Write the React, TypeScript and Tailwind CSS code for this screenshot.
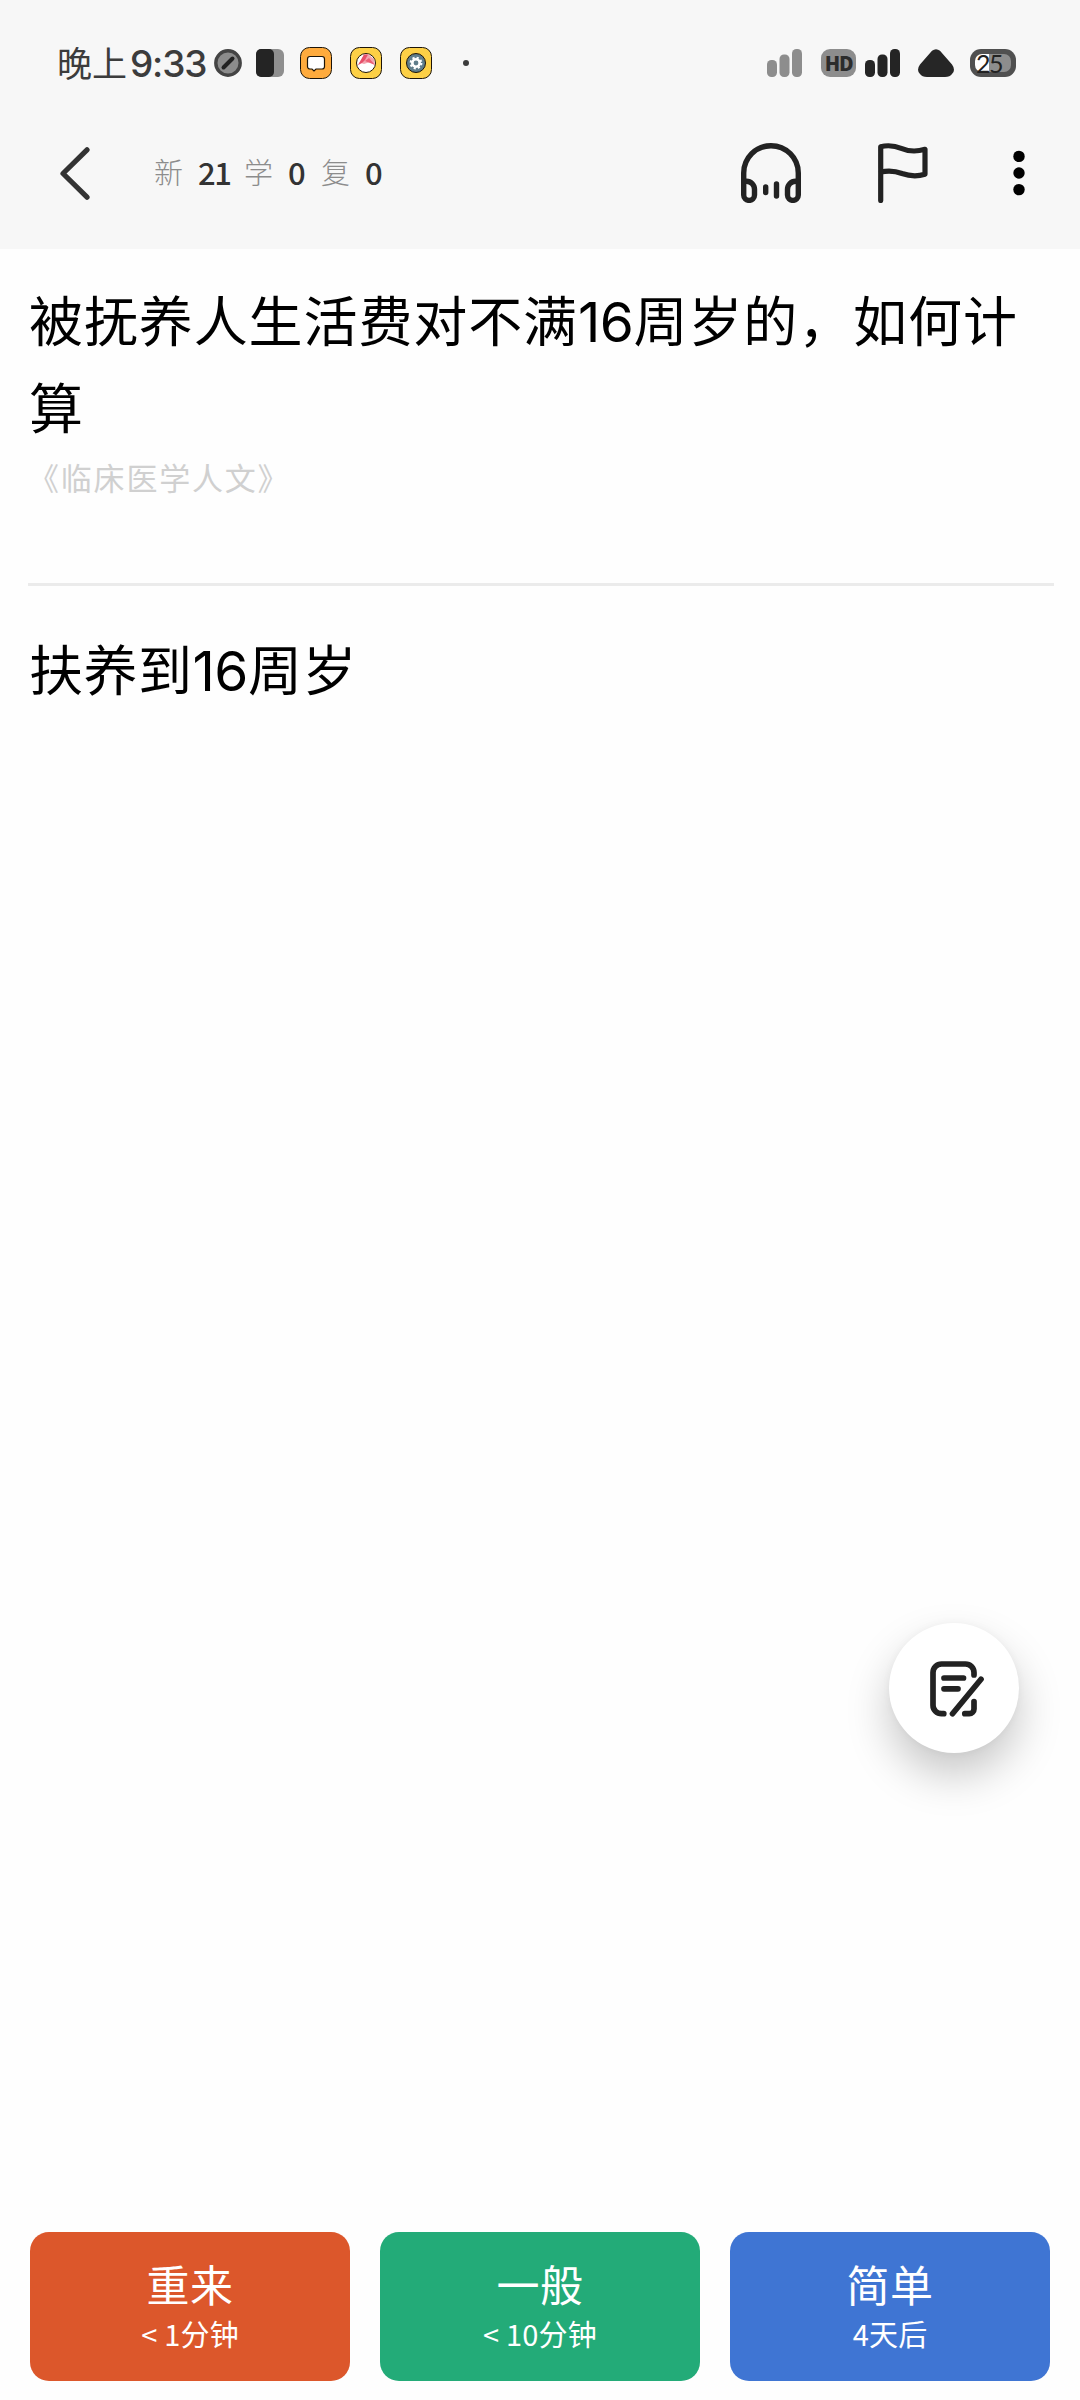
import type { ReactNode } from "react";

interface AnswerButtonProps {
  label: string;
  interval: ReactNode;
  className: string;
}

const counts = [
  { label: "新", value: 21, width: "w-[46px]" },
  { label: "学", value: 0, width: "w-[33px]" },
  { label: "复", value: 0, width: "w-[33px]" },
];

function Num({ children }: { children: ReactNode }) {
  return <span className="font-[Inter] text-[55px] leading-none tracking-[-0.5px]">{children}</span>;
}

function SignalIcon({ className }: { className: string }) {
  return (
    <svg className={className} width="35" height="28" viewBox="0 0 35 28" fill="currentColor">
      <rect x="0" y="11" width="10" height="17" rx="4.5" />
      <rect x="12.5" y="5.5" width="10" height="22.5" rx="4.5" />
      <rect x="25" y="0" width="10" height="28" rx="4.5" />
    </svg>
  );
}

function StatusBar() {
  return (
    <div className="flex h-[126px] items-center justify-between pr-16 pl-[57px]">
      <div className="flex items-center">
        <div className="flex w-[157px] items-center whitespace-nowrap text-[#3c3c3c]">
          <span className="pb-1 text-[35px] leading-none">晚上</span>
          <span className="ml-[3px] font-[Inter] text-[37px] leading-none font-medium tracking-[-1.2px]">9:33</span>
        </div>
        <svg width="28" height="28" viewBox="0 0 28 28">
          <circle cx="14" cy="14" r="12.2" fill="#8c8c8c" stroke="#444" strokeWidth="3.4" />
          <path d="M9.5 18.5L18.5 9.5" stroke="#222" strokeWidth="4" strokeLinecap="round" />
        </svg>
        <svg className="ml-3.5" width="28" height="28" viewBox="0 0 28 28">
          <rect width="28" height="28" rx="6" fill="#8f8f8f" />
          <rect width="18" height="28" rx="5" fill="#242424" />
        </svg>
        <svg className="ml-4" width="32" height="32" viewBox="0 0 32 32">
          <rect x="0.5" y="0.5" width="31" height="31" rx="9" fill="#ffab3d" stroke="#1c1408" />
          <path d="M10 9.5H22A2.5 2.5 0 0 1 24.5 12V19.5A2.5 2.5 0 0 1 22 22H16L14 24L12 22H10A2.5 2.5 0 0 1 7.5 19.5V12A2.5 2.5 0 0 1 10 9.5Z" fill="#fff" stroke="#1c1408" strokeWidth="1.2" />
        </svg>
        <svg className="ml-[18px]" width="32" height="32" viewBox="0 0 32 32">
          <rect x="0.5" y="0.5" width="31" height="31" rx="9" fill="#fdd046" stroke="#1c1408" />
          <circle cx="16" cy="16" r="9.5" fill="#fff" stroke="#1c1408" />
          <path d="M8 18L14 8L18 7L24 12L25 18L20 15L14 17L11 16Z" fill="#f3a5b0" />
          <path d="M8 18L14 7.5H18L15 13L12 16Z" fill="#e6506b" />
          <path d="M15 14L19 11L25 18L20 16Z" fill="#ec5f75" />
        </svg>
        <svg className="ml-[18px]" width="32" height="32" viewBox="0 0 32 32">
          <rect x="0.5" y="0.5" width="31" height="31" rx="9" fill="#fdd046" stroke="#1c1408" />
          <circle cx="16" cy="16" r="9.5" fill="#5f7d8b" stroke="#1c1408" />
          <circle cx="16" cy="16" r="5.3" fill="none" stroke="#fff" strokeWidth="2.2" strokeDasharray="2.08 2.08" />
          <circle cx="16" cy="16" r="3.7" fill="none" stroke="#fff" strokeWidth="2.6" />
        </svg>
        <span className="ml-[31px] size-1.5 rounded-full bg-[#3c3c3c]" />
      </div>

      <div className="flex items-center">
        <SignalIcon className="text-[#8d8d8d]" />
        <span className="ml-[19px] flex h-7 w-[35px] items-center justify-center rounded-[9px] bg-[#8d8d8d] font-['Noto_Sans_CJK_SC'] text-[20px] leading-none font-black tracking-[-1.2px] text-[#2c2c2c]">
          HD
        </span>
        <SignalIcon className="ml-[9px] text-[#242424]" />
        <svg className="ml-[18px]" width="36" height="28" viewBox="0 0 36 28" fill="#262626">
          <path d="M14 1.8Q18 -1.5 22 1.8L34 15.5Q38 21 34 25Q32 28 27 28H9Q4 28 2 25Q-2 21 2 15.5Z" />
        </svg>
        <div className="ml-4 h-7 w-[46px] rounded-[11px] bg-[#505050] p-[5px]">
          <div className="flex h-[18px] items-center rounded-[7px] bg-linear-to-r from-white from-40% to-[#8d8d8d] to-40% pl-px font-[Lato] text-[25px] leading-none tracking-[-1.5px] text-[#222]">
            25
          </div>
        </div>
      </div>
    </div>
  );
}

function NavBar() {
  return (
    <div className="flex h-[94px] items-center justify-between pr-[55px] pl-[60px]">
      <div className="flex items-center">
        <svg width="30" height="53" viewBox="0 0 30 53" fill="none" stroke="#333" strokeWidth="5.2" strokeLinecap="round" strokeLinejoin="round">
          <path d="M27 2.8L3 26.5L27 50.2" />
        </svg>
        <div className="ml-16 flex items-center pb-1">
          {counts.map((item) => (
            <div key={item.label} className="flex items-center">
              <span className="w-11 text-[29px] leading-none font-light text-[#8c8c8c]">{item.label}</span>
              <span className={`${item.width} text-[31px] leading-none font-medium tracking-[-1.5px] text-[#333]`}>
                {item.value}
              </span>
            </div>
          ))}
        </div>
      </div>

      <div className="flex items-center">
        <svg width="60" height="60" viewBox="0 0 60 60" fill="none" stroke="#222" strokeWidth="5.4" strokeLinecap="round" strokeLinejoin="round">
          <path d="M2.7 38.3H5.5A8 8 0 0 1 13.5 46.3V52A5.4 5.4 0 0 1 2.7 52V30A27.3 27.3 0 0 1 57.3 30V52A5.4 5.4 0 0 1 46.5 52V46.3A8 8 0 0 1 54.5 38.3H57.3" />
          <path d="M24.7 44V49.5M35.5 41V53" />
        </svg>
        <svg className="ml-[77px]" width="50" height="60" viewBox="0 0 50 60" fill="none" stroke="#222" strokeWidth="5.2" strokeLinecap="round" strokeLinejoin="round">
          <path d="M2.7 57.5V3.8C11 1.4 18 3.2 24 5.6C31 8.5 38 9 47 6.3V31.3C38 34 31 33 24 30.5C18 28.2 12 27 2.7 29" />
        </svg>
        <svg className="ml-[85px]" width="12" height="46" viewBox="0 0 12 46">
          <circle cx="6" cy="6.4" r="5.7" />
          <circle cx="6" cy="23" r="5.7" />
          <circle cx="6" cy="39.6" r="5.7" />
        </svg>
      </div>
    </div>
  );
}

function AnswerButton({ label, interval, className }: AnswerButtonProps) {
  return (
    <button className={`flex h-[149px] flex-1 flex-col items-center rounded-[19px] pt-6 text-white ${className}`}>
      <span className="text-[43px] leading-[54px] tracking-[0.5px]">{label}</span>
      <span className="mt-1 text-[29px] leading-[38px] tracking-[0.2px]">{interval}</span>
    </button>
  );
}

export default function App() {
  return (
    <div className="relative flex h-[2400px] w-[1080px] flex-col bg-[#fefefe] font-['Noto_Sans_CJK_SC',sans-serif]">
      <header className="h-[249px] bg-[#f7f7f7]">
        <StatusBar />
        <NavBar />
      </header>

      <main className="flex-1 pt-[26px] pr-[26px] pl-7 text-black">
        <h1 className="pl-px text-[54px] leading-[87px] tracking-[0.9px]">
          被抚养人生活费对不满<Num>16</Num>周岁的，如何计算
        </h1>
        <p className="mt-[5px] text-[31px] leading-[46px] tracking-[1.8px] text-[#d0d0d0]">《临床医学人文》</p>
        <hr className="mt-[83px] border-t-[3px] border-[#ebebeb]" />
        <p className="mt-[38px] pl-px text-[54px] leading-[87px] tracking-[0.5px]">
          扶养到<Num>16</Num>周岁
        </p>
      </main>

      <footer className="flex gap-[30px] px-[30px] pb-[19px]">
        <AnswerButton label="重来" interval="< 1分钟" className="bg-[#dc572b]" />
        <AnswerButton label="一般" interval="< 10分钟" className="bg-[#23ab78]" />
        <AnswerButton label="简单" interval="4天后" className="bg-[#3f75d3]" />
      </footer>

      {/* Floating note button */}
      <button className="absolute top-[1623px] right-[61px] flex size-[130px] items-center justify-center rounded-full bg-white pt-0.5 pl-1.5 shadow-[0_22px_44px_rgba(0,0,0,0.22),0_0_8px_rgba(0,0,0,0.04)]">
        <svg width="54" height="56" viewBox="0 0 54 56" fill="none" stroke="#222" strokeWidth="5.7" strokeLinecap="round" strokeLinejoin="round">
          <path d="M13.8 52.7H11.5A8.5 8.5 0 0 1 3 44.2V11.5A8.5 8.5 0 0 1 11.5 3H35.5A8.5 8.5 0 0 1 44 11.5V14" />
          <path d="M44 40.5V48A4.7 4.7 0 0 1 39.3 52.7H34.8" />
          <path d="M22.5 52.7L51 18.3" />
          <path d="M14 17H33.5M14 27.8H28" />
        </svg>
      </button>
    </div>
  );
}
